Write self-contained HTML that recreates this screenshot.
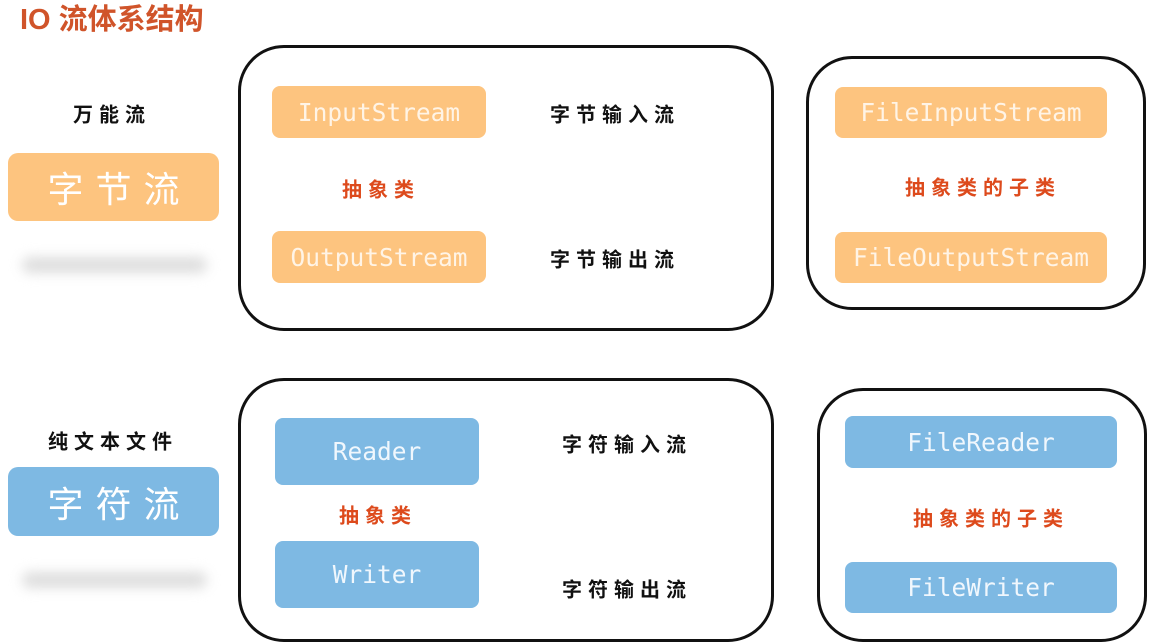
<!DOCTYPE html>
<html><head><meta charset="utf-8"><style>
body{margin:0;width:1174px;height:644px;background:#fff;position:relative;overflow:hidden;font-family:"Liberation Sans","Noto Sans CJK SC",sans-serif}
div{position:absolute;box-sizing:border-box}
.t{white-space:nowrap;transform:translate(-50%,-50%)}
.cn{font-family:"Liberation Sans","Noto Sans CJK SC",sans-serif;font-weight:bold;font-size:20px;letter-spacing:6px;color:#111}
.red{color:#dd4a1c}
.ob{background:#fdc47f;border-radius:8px;color:#fff4e6;font-family:"DejaVu Sans Mono","Liberation Mono",monospace;font-size:24.5px;display:flex;align-items:center;justify-content:center}
.bb{background:#7eb9e3;border-radius:8px;color:#f0f7fd;font-family:"DejaVu Sans Mono","Liberation Mono",monospace;font-size:24.5px;display:flex;align-items:center;justify-content:center}
.frame{border:3px solid #111;border-radius:46px}
.big{color:#fff;font-size:36px;letter-spacing:12px;display:flex;align-items:center;justify-content:center;border-radius:10px;font-family:"Liberation Sans","Noto Sans CJK SC",sans-serif;padding-left:12px}
.sh{background:#ddd;filter:blur(6px);border-radius:10px}
</style></head><body>
<div style="left:20px;top:-4px;font-size:29px;font-weight:bold;color:#d0542a;white-space:nowrap">IO 流体系结构</div>

<div class="t cn" style="left:112px;top:113px">万能流</div>
<div class="big" style="left:8px;top:153px;width:211px;height:68px;background:#fdc47f">字节流</div>
<div class="sh" style="left:22px;top:257px;width:185px;height:16px"></div>

<div class="frame" style="left:238px;top:45px;width:536px;height:286px"></div>
<div class="ob" style="left:272px;top:86px;width:214px;height:52px">InputStream</div>
<div class="ob" style="left:272px;top:231px;width:214px;height:52px">OutputStream</div>
<div class="t cn red" style="left:381px;top:188px">抽象类</div>
<div class="t cn" style="left:615px;top:113px">字节输入流</div>
<div class="t cn" style="left:615px;top:258px">字节输出流</div>

<div class="frame" style="left:806px;top:56px;width:340px;height:254px"></div>
<div class="ob" style="left:835px;top:87px;width:272px;height:51px">FileInputStream</div>
<div class="ob" style="left:835px;top:232px;width:272px;height:51px">FileOutputStream</div>
<div class="t cn red" style="left:983px;top:186px">抽象类的子类</div>

<div class="t cn" style="left:113px;top:440px">纯文本文件</div>
<div class="big" style="left:8px;top:467px;width:211px;height:69px;background:#7eb9e3">字符流</div>
<div class="sh" style="left:22px;top:572px;width:185px;height:16px"></div>

<div class="frame" style="left:238px;top:378px;width:536px;height:264px"></div>
<div class="bb" style="left:275px;top:418px;width:204px;height:67px">Reader</div>
<div class="bb" style="left:275px;top:541px;width:204px;height:67px">Writer</div>
<div class="t cn red" style="left:378px;top:514px">抽象类</div>
<div class="t cn" style="left:627px;top:443px">字符输入流</div>
<div class="t cn" style="left:627px;top:588px">字符输出流</div>

<div class="frame" style="left:817px;top:388px;width:330px;height:254px"></div>
<div class="bb" style="left:845px;top:416px;width:272px;height:52px">FileReader</div>
<div class="bb" style="left:845px;top:562px;width:272px;height:51px">FileWriter</div>
<div class="t cn red" style="left:991px;top:517px">抽象类的子类</div>
</body></html>
